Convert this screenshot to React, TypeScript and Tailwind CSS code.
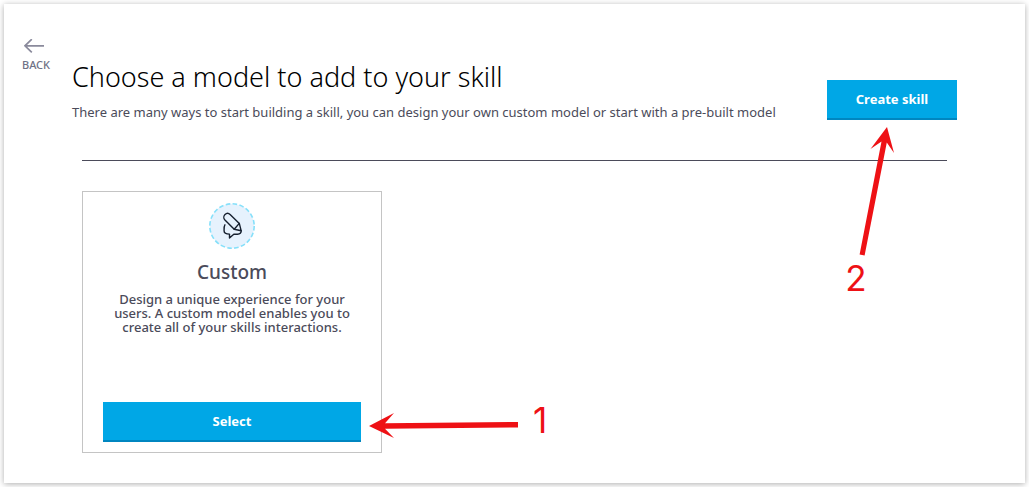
import React from "react";

function BackLink() {
  return (
    <a
      href="#back"
      className="mt-[35px] flex h-8 w-8 shrink-0 flex-col items-center text-[11px] leading-4 font-medium text-[#6f7286]"
    >
      <svg width="20" height="14" viewBox="0 0 20 14" className="mr-1 shrink-0" fill="none" stroke="#8a8a9c" strokeWidth="1.7" aria-hidden="true">
        <path d="M20 6.8H1.2M7.8 0.2L1 6.8l6.8 6.6" />
      </svg>
      <span className="mt-1">BACK</span>
    </a>
  );
}

function ActionButton({ label, className }: { label: string; className: string }) {
  return (
    <button
      type="button"
      className={`h-10 border-b-2 border-[#0086c0] bg-[#00a7e6] pt-0.5 text-[13px] font-bold text-white ${className}`}
    >
      {label}
    </button>
  );
}

function CustomIcon() {
  return (
    <svg width="46" height="46" viewBox="0 0 46 46" fill="none" aria-hidden="true">
      <circle cx="23" cy="23" r="22.2" fill="#e6f2fd" stroke="#86e0fa" strokeWidth="1.6" strokeDasharray="4.6 2.37" />
      <g stroke="#16202f" strokeWidth="1.4" strokeLinejoin="round" strokeLinecap="round">
        <path d="M15.7 16.8L25.2 26.2L32.2 27.8L30.3 20.4L21.1 11.5C19.6 10 17.4 10.1 16 11.5C14.6 12.9 14.4 15.3 15.7 16.8Z" />
        <path d="M25.2 26.2L30.3 20.4" />
        <path d="M15.9 21.8C14.9 23.2 15.1 25 15.1 28C15.1 30.2 16.4 31.1 20.5 31.1V35L24.8 31.2H28.6C31 31.2 32.2 30.3 32.2 27.8" />
      </g>
    </svg>
  );
}

export default function App() {
  return (
    <div className="bg-white p-1 font-['Noto_Sans',sans-serif]">
      <div className="flex bg-white pr-[68px] pb-[30px] pl-4 shadow-[0_1px_6px_rgba(0,0,0,0.32)]">
        <BackLink />
        <main className="ml-5 min-w-0 flex-1 pt-[55px]">
          <header className="flex justify-between">
            <div>
              <h1 className="text-[27px] leading-9 font-light whitespace-nowrap text-black">
                Choose a model to add to your skill
              </h1>
              <p className="mt-[5px] text-[13px] leading-6 whitespace-nowrap text-[#4b4b5a]">
                There are many ways to start building a skill, you can design your own custom model or start with a
                pre-built model
              </p>
            </div>
            <div className="relative mt-[21px] h-10 shrink-0">
              <ActionButton label="Create skill" className="w-[130px]" />
              <div className="absolute top-[46px] right-[62px] w-[50px] text-[#ee1115]">
                <svg width="50" height="132" viewBox="0 0 50 132" fill="currentColor" aria-hidden="true">
                  <path d="M42 1L49 27L41.8 16.5L19.6 129.5L14.6 128.5L36.5 15.5L25.5 23Z" />
                </svg>
                <span className="block pr-7 text-center font-['Inter',sans-serif] text-[35px] leading-10">2</span>
              </div>
            </div>
          </header>
          <hr className="mx-2.5 mt-9 border-[#4b4b5a]" />
          <section className="relative mt-[30px] ml-2.5 flex h-[262px] w-[300px] flex-col items-center border border-[#c4c4c4] px-5 pt-[11px] pb-2.5 text-center text-[#4b4b5a]">
            <CustomIcon />
            <h2 className="mt-[11px] text-[19px] leading-6 font-medium">Custom</h2>
            <p className="mt-2 text-[13px] leading-[14px] font-medium">
              Design a unique experience for your users. A custom model enables you to create all of your skills interactions.
            </p>
            <ActionButton label="Select" className="mt-auto w-full" />
            <div className="absolute top-[214px] left-[286px] flex items-start gap-[15px] text-[#ee1115]">
              <svg width="149" height="40" viewBox="0 0 149 40" fill="currentColor" aria-hidden="true">
                <path d="M0 20L25 7L16 17.2L149 16V21.5L16 22.8L25 32Z" />
              </svg>
              <span className="font-['Inter',sans-serif] text-[35px] leading-7">1</span>
            </div>
          </section>
        </main>
      </div>
    </div>
  );
}
